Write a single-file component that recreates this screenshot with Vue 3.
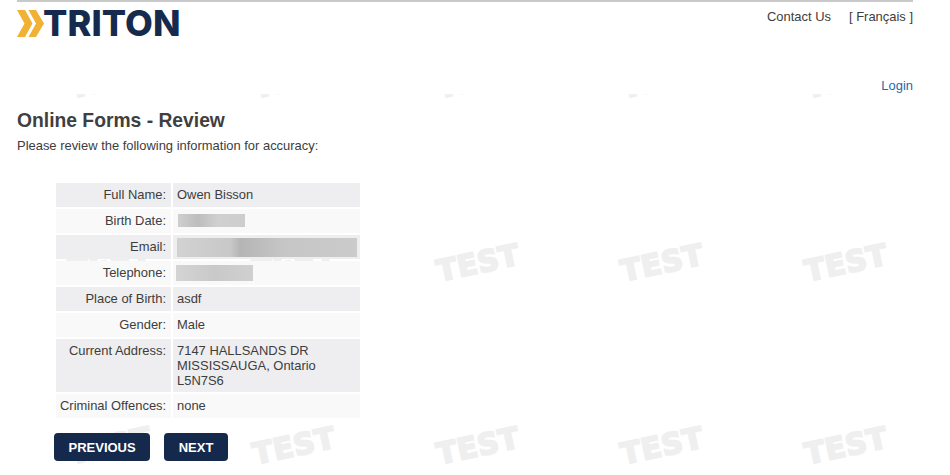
<template>
  <div class="page">
    <div class="watermark" aria-hidden="true">
      <span v-for="n in 15" :key="n" class="mark">TEST</span>
    </div>

    <header class="header">
      <div class="top-row">
        <a class="logo" href="#">
          <svg class="chevrons" width="27" height="27" viewBox="0 0 27 27">
            <path d="M0 0H8L15.5 13.5L8 27H0L7.5 13.5Z" fill="#f0b135" />
            <path d="M11.5 0H19L27 13.5L19 27H11.5L19 13.5Z" fill="#f0b135" />
          </svg>
          <span class="logo-text">TRITON</span>
        </a>
        <nav class="top-links">
          <a href="#">Contact Us</a>
          <a href="#">[ Français ]</a>
        </nav>
      </div>
      <div class="login-row"><a href="#">Login</a></div>
    </header>

    <main class="content">
      <h1>Online Forms - Review</h1>
      <p class="intro">Please review the following information for accuracy:</p>

      <table class="review">
        <tbody>
          <tr v-for="row in rows" :key="row.label">
            <th>{{ row.label }}</th>
            <td>
              <div v-if="row.blur" class="redacted" :class="row.blur"></div>
              <template v-else>
                <div v-for="line in row.lines" :key="line">{{ line }}</div>
              </template>
            </td>
          </tr>
        </tbody>
      </table>

      <div class="actions">
        <button type="button">PREVIOUS</button>
        <button type="button">NEXT</button>
      </div>
    </main>
  </div>
</template>

<script setup>
const rows = [
  { label: 'Full Name:', lines: ['Owen Bisson'] },
  { label: 'Birth Date:', blur: 'blur-date' },
  { label: 'Email:', blur: 'blur-email' },
  { label: 'Telephone:', blur: 'blur-phone' },
  { label: 'Place of Birth:', lines: ['asdf'] },
  { label: 'Gender:', lines: ['Male'] },
  { label: 'Current Address:', lines: ['7147 HALLSANDS DR', 'MISSISSAUGA, Ontario', 'L5N7S6'] },
  { label: 'Criminal Offences:', lines: ['none'] },
]
</script>

<style>
html, body {
  margin: 0;
  background: #fff;
  overflow: hidden;
}
</style>

<style scoped>
.page {
  position: relative;
  width: 950px;
  height: 475px;
  overflow: hidden;
  font-family: "Liberation Sans", Arial, sans-serif;
  font-size: 12.95px;
  color: #3d3d3d;
}

.watermark {
  position: absolute;
  left: 18px;
  top: -12px;
  display: grid;
  grid-template-columns: repeat(5, 184px);
  grid-auto-rows: 183px;
}

.mark {
  display: flex;
  align-items: center;
  justify-content: center;
  font-family: "DejaVu Sans", sans-serif;
  font-weight: 700;
  font-size: 29.5px;
  letter-spacing: 0.5px;
  color: #efefef;
  -webkit-text-stroke: 2px #efefef;
  transform: rotate(-12deg);
}

.header {
  position: relative;
  height: 94px;
  box-sizing: border-box;
  padding: 0 37px 0 17px;
  background: #fff;
}

.top-row {
  display: flex;
  justify-content: space-between;
  height: 78px;
  border-top: 2px solid #c9c9c9;
  box-sizing: border-box;
}

.logo {
  display: flex;
  align-items: flex-start;
  height: 36px;
  padding-top: 8px;
  text-decoration: none;
}

.chevrons {
  display: block;
}

.logo-text {
  margin-left: -1px;
  font-family: Inter, sans-serif;
  font-weight: 800;
  font-size: 36px;
  line-height: 27px;
  letter-spacing: 0.1px;
  color: #152a4c;
}

.top-links {
  display: flex;
  gap: 18px;
  padding-top: 7px;
}

.top-links a {
  color: #3d3d3d;
  text-decoration: none;
}

.login-row {
  text-align: right;
  line-height: 16px;
}

.login-row a {
  color: #1f6aa5;
  text-decoration: none;
}

.content {
  position: relative;
  padding: 16px 37px 0 17px;
}

h1 {
  margin: 0;
  font-size: 19.3px;
  line-height: 22px;
  font-weight: 700;
  color: #3f3f3f;
}

.intro {
  margin: 6px 0 0;
  line-height: 16px;
}

.review {
  margin: 27px 0 0 37px;
  border-collapse: separate;
  border-spacing: 2px;
  width: 308px;
  table-layout: fixed;
}

.review th,
.review td {
  box-sizing: border-box;
  height: 24px;
  padding: 4px 4px;
  line-height: 15px;
  vertical-align: top;
  font-weight: 400;
}

.review th {
  width: 115px;
  padding-right: 5px;
  text-align: right;
  white-space: nowrap;
}

.review tr:nth-child(odd) th,
.review tr:nth-child(odd) td {
  background: #eeedef;
}

.review tr:nth-child(even) th,
.review tr:nth-child(even) td {
  background: #f9f9f9;
}

.redacted {
  filter: blur(0.5px);
}

.blur-date {
  width: 67px;
  height: 13px;
  margin: 1px 0 0 1px;
  background: linear-gradient(90deg, #cfcfcf, #bdbdbd 30%, #d0d0d0 60%, #cdcdcd);
}

.blur-email {
  width: 180px;
  height: 19px;
  margin: -1px 0 -3px 0;
  background: linear-gradient(90deg, #d2d2d2, #c8c8c8 30%, #b5b5b5 35%, #c6c6c6 60%, #cbcbcb);
}

.blur-phone {
  width: 77px;
  height: 16px;
  margin: 0 0 -1px -1px;
  background: linear-gradient(90deg, #d4d4d4, #c9c9c9 50%, #d0d0d0);
}

.actions {
  display: flex;
  gap: 14px;
  margin: 13px 0 0 37px;
}

.actions button {
  height: 28px;
  padding: 0 14.5px;
  border: 0;
  border-radius: 4px;
  background: #14294b;
  color: #fff;
  font-family: "Liberation Sans", Arial, sans-serif;
  font-size: 13px;
  font-weight: 700;
}
</style>
